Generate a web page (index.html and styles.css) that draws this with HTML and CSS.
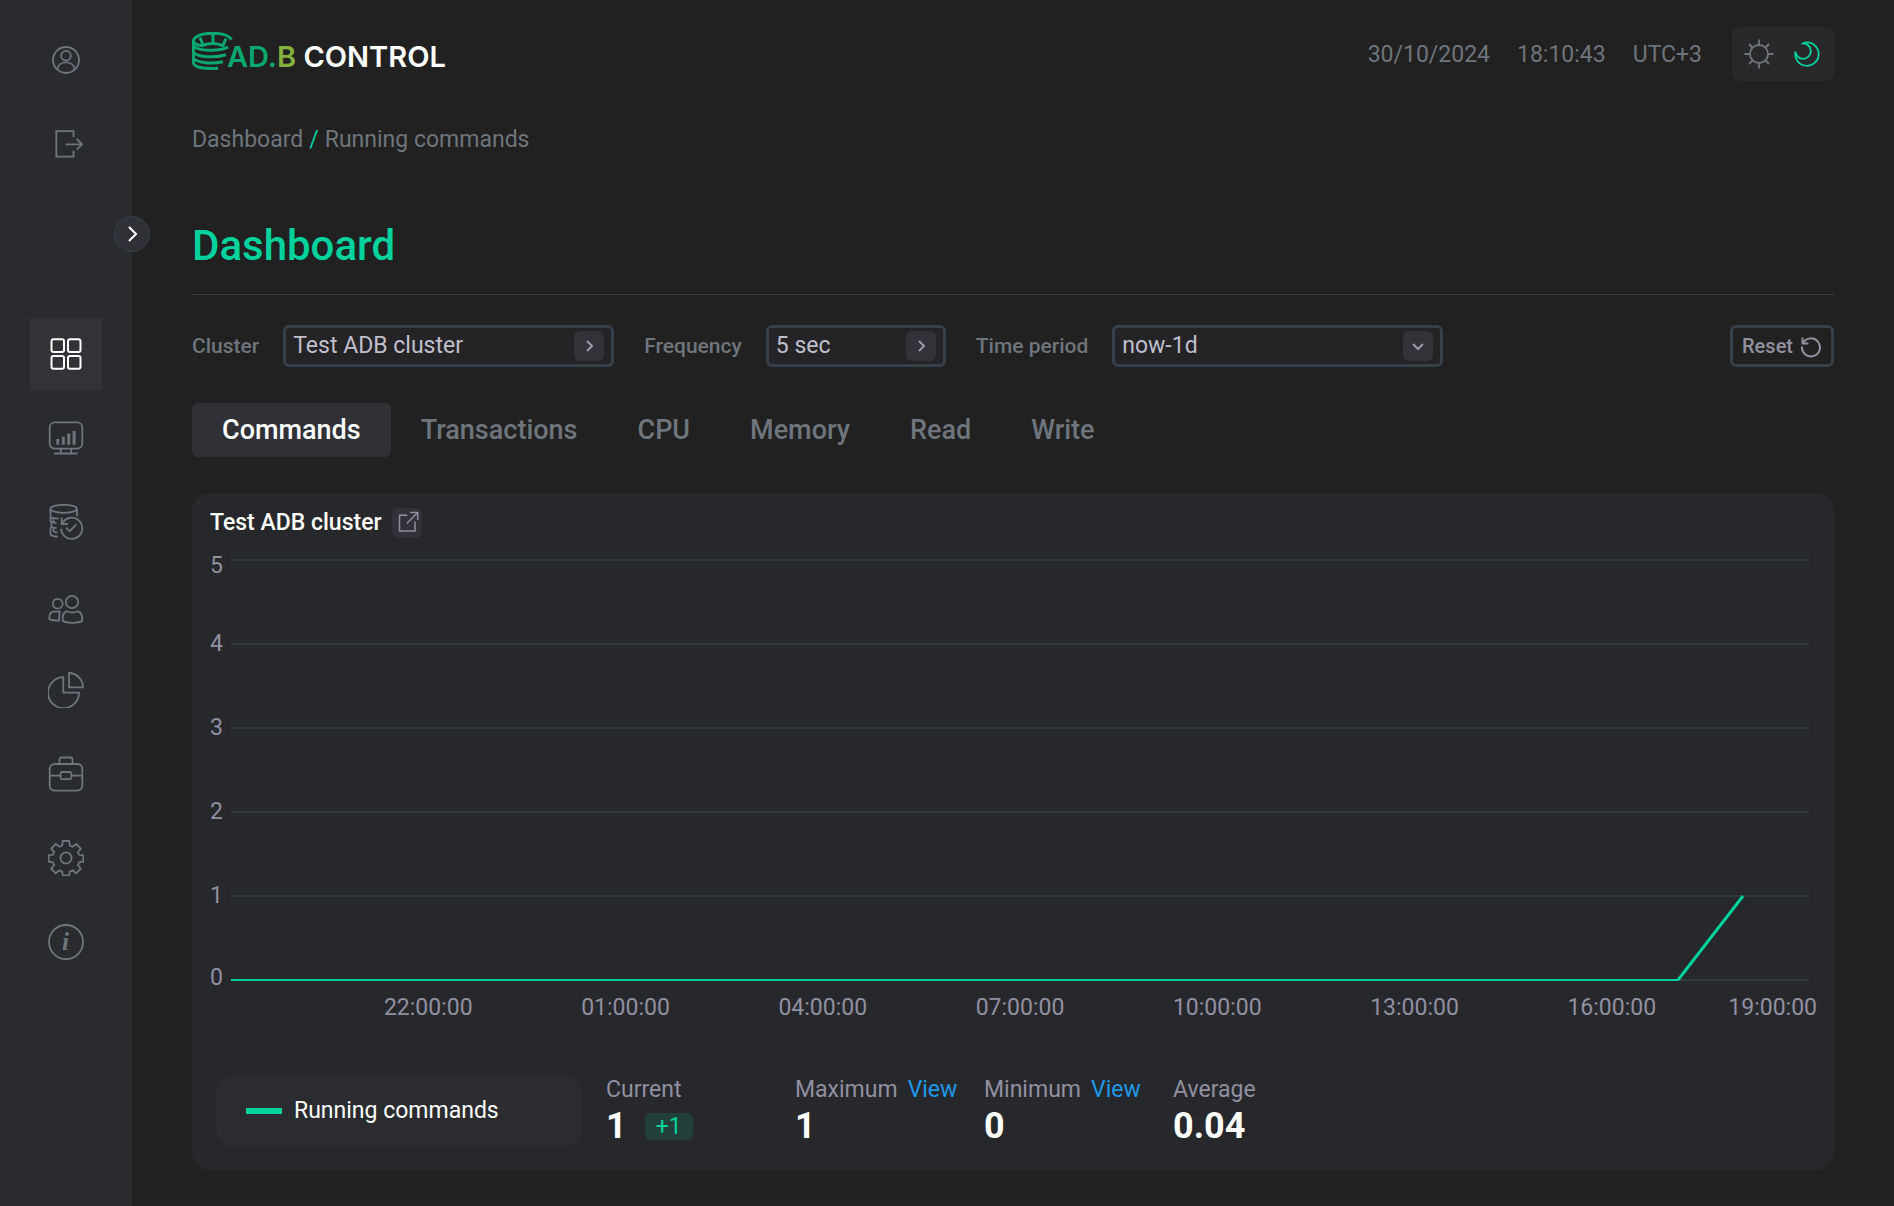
FILE: index.html
```html
<!DOCTYPE html>
<html lang="en">
<head>
<meta charset="utf-8">
<meta name="viewport" content="width=device-width, initial-scale=1">
<title>ADB Control - Dashboard</title>
<link rel="stylesheet" href="styles.css">
</head>
<body>
<div class="app">
  <aside class="sidebar">
    <div class="side-group">
      <a class="side-link" href="#profile" aria-label="Profile">
        <svg class="icon" viewBox="0 0 36 36"><circle cx="18" cy="18" r="13"/><circle cx="18" cy="13.7" r="4.8"/><path d="M9.3 27C9.8 22.800 13.500 20.400 18 20.400s8.200 2.400 8.700 6.600"/></svg>
      </a>
      <a class="side-link" href="#logout" aria-label="Log out">
        <svg class="icon" viewBox="0 0 36 36"><path d="M25.500 11V5.200H8.300v25.400h17.200v-5.800M17.500 18.300h16.500M28.800 13l5.300 5.300-5.300 5.400"/></svg>
      </a>
    </div>
    <nav class="side-group side-nav" aria-label="Main">
      <a class="side-link active" href="#dashboard" aria-label="Dashboard">
        <svg class="icon" viewBox="0 0 36 36"><rect x="3.500" y="3.300" width="12.500" height="12.700" rx="2"/><rect x="20" y="3.300" width="12.500" height="12.700" rx="2"/><rect x="3.500" y="20" width="12.500" height="12.700" rx="2"/><rect x="20" y="20" width="12.500" height="12.700" rx="2"/></svg>
      </a>
      <a class="side-link" href="#monitoring" aria-label="Monitoring">
        <svg class="icon" viewBox="0 0 36 36"><rect x="1.700" y="2.400" width="32.600" height="26.200" rx="5"/><path d="M12.800 28.600v4.600M23.200 28.600v4.600M6 33.500h23.600"/><path class="solid" d="M8.300 19h3v5.700h-3zM13.800 16.700h3v8h-3zM19.200 13.800h3v10.900h-3zM24.600 11h3v13.700h-3z"/></svg>
      </a>
      <a class="side-link" href="#backups" aria-label="Backups">
        <svg class="icon" viewBox="0 0 36 36"><ellipse cx="15.700" cy="4.800" rx="13.200" ry="4"/><path d="M2.500 5v8c1.500 1 4.500 1.300 8 1.500M29 5v7.200M2.500 13.500v4c1.500 1 3.500 1.300 6 1.500M3.500 18v5.200c1.500.5 3 .6 5 .8M2.500 23.300v6.900c1 1.700 4 2.400 7.500 2.500M5.500 14v3.500M5.500 24v3.600c1 .6 2 .8 4 1"/><path d="M14.500 19a10.600 10.600 0 1 1-1.400 5.800M13.700 13.700v6.300h6.300M18 23.700l3.700 3.600 6.600-7"/></svg>
      </a>
      <a class="side-link" href="#users" aria-label="Users">
        <svg class="icon" viewBox="0 0 36 36"><circle cx="24" cy="14" r="6.200"/><circle cx="9.700" cy="15.700" r="4.900"/><path d="M19 23.200c-3 .8-4.700 4.500-4.300 9.600 3 2.500 16 2.900 19.500 0 .3-5.500-1.600-8.800-4.600-9.600-3 1.500-7.600 1.500-10.600 0zM11.800 23.600H5.500c-3 0-4.400 3-4.100 7.500 2.600 1.200 6 1.500 9.600 1.500.1-3.200.3-6 .8-9z"/></svg>
      </a>
      <a class="side-link" href="#reports" aria-label="Reports">
        <svg class="icon" viewBox="0 0 36 36"><path d="M15.300 5.200v15.500H31A15.500 15.500 0 1 1 15.300 5.200zM21 1v14.300h14A14.300 14.300 0 0 0 21 1z"/></svg>
      </a>
      <a class="side-link" href="#jobs" aria-label="Jobs">
        <svg class="icon" viewBox="0 0 36 36"><rect x="1.700" y="8" width="32.600" height="26.600" rx="5"/><path d="M11.500 8V3.500a2 2 0 0 1 2-2h9a2 2 0 0 1 2 2V8M2 19.700h10.600M23.400 19.700H34"/><rect x="12.600" y="16" width="10.800" height="7.200" rx="1.500"/></svg>
      </a>
      <a class="side-link" href="#settings" aria-label="Settings">
        <svg class="icon" viewBox="0 0 36 36"><circle cx="18" cy="18" r="5.600"/><path d="M14.800 1h6.400l.6 4.600 2.800 1.200 3.700-2.900 4.500 4.600-2.900 3.600 1.200 2.700 4.200.6v6.200l-4.200.8-1.200 2.700 2.900 3.600-4.500 4.600-3.700-2.900-2.800 1.200-.6 3.700h-6.400l-.6-3.700-2.800-1.200-3.700 2.900-4.500-4.600 2.900-3.600-1.200-2.700-4.200-.8v-6.200l4.200-.6 1.200-2.700-2.900-3.600 4.500-4.600 3.700 2.900 2.800-1.200z"/></svg>
      </a>
      <a class="side-link" href="#about" aria-label="About">
        <svg class="icon" viewBox="0 0 36 36"><circle cx="18" cy="18" r="17"/><text class="info-letter" x="17.500" y="26" text-anchor="middle">i</text></svg>
      </a>
    </nav>
    <button class="expand" type="button" aria-label="Expand menu">
      <svg class="icon-small" viewBox="0 0 18 18"><path d="M6.500 2.500 13 9l-6.500 6.500"/></svg>
    </button>
  </aside>

  <main class="main">
    <header class="topbar">
      <a class="logo" href="#home">
        <svg class="logo-mark" viewBox="0 0 42 38"><path d="M39.500 7.500C37 3.500 29 1.300 20.500 1.300 9.500 1.300 1.400 4.600 1.400 9.200v22C2.500 34.500 10 37.300 26 36.300M1.400 9.200c.5 2 4 4 9 4.500 6-2.800 14-2.800 20.500 0L34 6.500M8 5.500l3 7.500M21 2v8.500M1.400 14c5 5 24 6 34.600 1.200M1.400 20.500c5 5 22 5.500 32.600 2.200M1.400 26.500c5 4.500 18 5.500 29.600 3.200"/></svg>
        <span class="logo-text"><span class="logo-ad">AD.</span><span class="logo-b">B</span> CONTROL</span>
      </a>
      <div class="top-info">
        <div class="clock"><span>30/10/2024</span><span>18:10:43</span><span>UTC+3</span></div>
        <div class="theme">
          <button class="theme-button" type="button" aria-label="Light theme">
            <svg class="icon" viewBox="0 0 36 36"><circle cx="18" cy="18" r="9"/><path d="M18 3.500V9M18 27v5.500M3.500 18H9M27 18h5.500M8 8l3.500 3.500M24.500 24.500 28 28M28 8l-3.500 3.500M11.500 24.500 8 28"/></svg>
          </button>
          <button class="theme-button on" type="button" aria-label="Dark theme">
            <svg class="icon" viewBox="0 0 36 36"><path d="M6.500 15.800A11.700 11.700 0 1 0 18 6.400c-1.500 0-3 .2-4 1A7.700 7.700 0 1 1 6.500 15.800z"/></svg>
          </button>
        </div>
      </div>
    </header>

    <nav class="crumbs" aria-label="Breadcrumb"><a href="#dashboard">Dashboard</a><span class="slash">/</span><a href="#running">Running commands</a></nav>

    <h1 class="title">Dashboard</h1>

    <form class="filters">
      <div class="field">
        <label for="cluster">Cluster</label>
        <div class="pick wide">
          <select id="cluster"><option>Test ADB cluster</option></select>
          <svg class="chevron" viewBox="0 0 30 30"><path d="m13 10 5 5-5 5"/></svg>
        </div>
      </div>
      <div class="field">
        <label for="frequency">Frequency</label>
        <div class="pick">
          <select id="frequency"><option>5 sec</option></select>
          <svg class="chevron" viewBox="0 0 30 30"><path d="m13 10 5 5-5 5"/></svg>
        </div>
      </div>
      <div class="field">
        <label for="period">Time period</label>
        <div class="pick wide">
          <select id="period"><option>now-1d</option></select>
          <svg class="chevron" viewBox="0 0 30 30"><path d="m10 13 5 5 5-5"/></svg>
        </div>
      </div>
      <button class="reset" type="reset">Reset
        <svg class="icon-reset" viewBox="0 0 24 24"><path d="M3.700 9.800A9 9 0 1 1 3 12.500M3.500 3.500v6h6"/></svg>
      </button>
    </form>

    <div class="tabs" role="tablist">
      <button class="tab on" type="button" role="tab" aria-selected="true">Commands</button>
      <button class="tab" type="button" role="tab">Transactions</button>
      <button class="tab" type="button" role="tab">CPU</button>
      <button class="tab" type="button" role="tab">Memory</button>
      <button class="tab" type="button" role="tab">Read</button>
      <button class="tab" type="button" role="tab">Write</button>
    </div>

    <section class="card">
      <div class="card-head">
        <h2>Test ADB cluster</h2>
        <a class="open" href="#cluster-page" aria-label="Open cluster">
          <svg viewBox="0 0 30 30"><path d="M15.300 7.300H7.500V23H23v-9.500M14.700 15.500 25.500 4.700M18 4.500h7.700V12"/></svg>
        </a>
      </div>
      <div class="chart">
        <div class="y-axis"><span>5</span><span>4</span><span>3</span><span>2</span><span>1</span><span>0</span></div>
        <svg class="plot" viewBox="0 0 1578 420" preserveAspectRatio="none" role="img" aria-label="Running commands over time">
          <path class="grid" d="M0 0H1578M0 84H1578M0 168H1578M0 252H1578M0 336H1578M0 420H1578"/>
          <path class="series flat" d="M0 420H1447"/>
          <path class="series" d="M1447 420L1512 336"/>
        </svg>
        <div class="x-axis"><i></i><span>22:00:00</span><span>01:00:00</span><span>04:00:00</span><span>07:00:00</span><span>10:00:00</span><span>13:00:00</span><span>16:00:00</span><span class="last">19:00:00</span></div>
      </div>
      <div class="summary">
        <div class="legend"><i class="swatch"></i>Running commands</div>
        <dl class="stats">
          <div><dt>Current</dt><dd>1<span class="delta">+1</span></dd></div>
          <div><dt>Maximum<a href="#max">View</a></dt><dd>1</dd></div>
          <div><dt>Minimum<a href="#min">View</a></dt><dd>0</dd></div>
          <div><dt>Average</dt><dd>0.04</dd></div>
        </dl>
      </div>
    </section>
  </main>
</div>
</body>
</html>
```

FILE: styles.css
```css
* { box-sizing: border-box; }

body {
  margin: 0;
  background: #212121;
  color: #6e757c;
  font-family: Roboto, "Liberation Sans", sans-serif;
  font-size: 23px;
  line-height: 30px;
}

a { color: inherit; text-decoration: none; }
button, select { font: inherit; color: inherit; }
button { cursor: pointer; }
svg { display: block; fill: none; stroke: currentColor; }

.app { display: flex; min-height: 100vh; }

/* Sidebar */
.sidebar {
  position: relative;
  flex: 0 0 132px;
  padding: 24px 30px;
  background: #2a2b2f;
}
.side-group { display: flex; flex-direction: column; gap: 12px; }
.side-nav { margin-top: 138px; }
.side-link {
  display: grid;
  place-items: center;
  height: 72px;
}
.side-link.active { background: #323238; color: #fff; }
.icon { width: 36px; height: 36px; stroke-width: 1.8; }
.side-link.active .icon { stroke-width: 2; }
.solid { fill: currentColor; stroke: none; }
.info-letter {
  font: italic bold 25px "Liberation Serif", serif;
  fill: currentColor;
  stroke: none;
}
.expand {
  position: absolute;
  top: 216px;
  right: -18px;
  display: grid;
  place-items: center;
  width: 36px;
  height: 36px;
  padding: 0;
  border: 1px solid #35404a;
  border-radius: 50%;
  background: #303136;
  color: #fff;
}
.icon-small { width: 18px; height: 18px; stroke-width: 2; stroke-linecap: round; }

/* Page */
.main { flex: 1; min-width: 0; padding: 27px 60px 36px; }
.topbar { display: flex; justify-content: space-between; height: 54px; }
.logo { display: flex; padding-top: 5px; color: #fff; }
.logo-mark { width: 42px; height: 38px; margin-right: -7px; color: #0aa870; stroke-width: 3; }
.logo-text {
  padding-top: 8px;
  font: 600 29px/34px Inter, "Liberation Sans", sans-serif;
  white-space: nowrap;
}
.logo-ad { color: #0aa870; }
.logo-b { color: #83b13b; }
.top-info { display: flex; align-items: center; gap: 30px; }
.clock { display: flex; gap: 27px; padding-top: 2px; white-space: nowrap; }
.theme {
  display: flex;
  gap: 12px;
  padding: 9px;
  border-radius: 8px;
  background: #29292c;
}
.theme-button { padding: 0; border: 0; background: none; }
.theme-button.on { color: #00d29d; }

.crumbs { display: flex; gap: 6px; margin-top: 44px; }
.slash { color: #00d29d; }

.title {
  margin: 67px 0 0;
  padding-bottom: 24px;
  border-bottom: 1px solid #3a3b3e;
  color: #00d29d;
  font-size: 42px;
  line-height: 48px;
  font-weight: 500;
}

.filters { display: flex; align-items: center; gap: 30px; margin-top: 30px; }
.field { display: flex; align-items: center; gap: 24px; }
.field label { font-size: 21px; font-weight: 500; white-space: nowrap; }
.pick { display: grid; align-items: center; width: 180px; }
.pick.wide { width: 331px; }
.pick select {
  grid-area: 1 / 1;
  width: 100%;
  height: 42px;
  padding: 0 48px 0 7px;
  border: 3px solid #35404a;
  border-radius: 6px;
  background: #242427;
  color: #c0bfcc;
  appearance: none;
}
.chevron {
  grid-area: 1 / 1;
  justify-self: end;
  width: 30px;
  height: 30px;
  margin-right: 10px;
  border-radius: 6px;
  background: #323238;
  color: #9c9baa;
  stroke-width: 2;
  pointer-events: none;
}
.reset {
  display: flex;
  align-items: center;
  gap: 6px;
  height: 42px;
  margin-left: auto;
  padding: 0 8px 0 9px;
  border: 3px solid #35404a;
  border-radius: 6px;
  background: none;
  color: #9190a0;
  font-size: 20px;
  font-weight: 500;
}
.icon-reset { width: 24px; height: 24px; stroke-width: 2; }

.tabs { display: flex; margin-top: 36px; }
.tab {
  height: 54px;
  padding: 0 30px;
  border: 0;
  border-radius: 6px;
  background: none;
  font-size: 27px;
  font-weight: 500;
}
.tab.on { background: #303136; color: #fff; }

/* Chart card */
.card {
  margin-top: 36px;
  padding: 15px 18px 23px;
  border-radius: 18px;
  background: #27282c;
}
.card-head { display: flex; align-items: center; gap: 10px; }
.card-head h2 { margin: 0; color: #fff; font-size: 23px; font-weight: 500; }
.open {
  width: 30px;
  height: 30px;
  border-radius: 6px;
  background: #323238;
  color: #9190a0;
}
.open svg { stroke-width: 1.5; }

.chart {
  display: grid;
  grid-template: 420px auto / 21px 1fr;
  margin: 22px 7px 0 0;
  color: #9190a0;
}
.y-axis { display: grid; grid-template-rows: 1fr repeat(4, 2fr) 1fr; }
.y-axis span { align-self: center; line-height: 24px; }
.y-axis span:first-child { align-self: start; margin-top: -6px; }
.y-axis span:last-child { align-self: end; margin-bottom: -10px; }
.plot { width: 100%; height: 100%; overflow: visible; }
.plot path { vector-effect: non-scaling-stroke; }
.grid { stroke: #313a43; stroke-width: 2; }
.series { stroke: #00d29d; stroke-width: 3; }
.series.flat { stroke-width: 2; }
.x-axis {
  grid-column: 2;
  display: grid;
  grid-template-columns: 1fr repeat(7, 2fr) 1fr;
  margin-top: 13px;
}
.x-axis span { justify-self: center; }
.x-axis .last { justify-self: end; margin-right: -8px; }

.summary { display: flex; gap: 24px; margin: 52px 0 0 6px; }
.legend {
  display: flex;
  align-items: center;
  gap: 12px;
  width: 366px;
  height: 72px;
  padding: 0 30px;
  border-radius: 18px;
  background: #2b2c30;
  color: #fff;
}
.swatch { width: 36px; height: 6px; background: #00d29d; }
.stats { display: grid; grid-template-columns: repeat(4, 189px); margin: 0; }
.stats dt { display: flex; gap: 10px; color: #9190a0; }
.stats dt a { color: #1d98ea; }
.stats dd {
  display: flex;
  align-items: center;
  gap: 18px;
  margin: 0;
  color: #fff;
  font-size: 36px;
  font-weight: 700;
  line-height: 42px;
}
.delta {
  padding: 0 11px;
  border-radius: 6px;
  background: #224039;
  color: #00d29d;
  font-size: 23px;
  font-weight: 400;
  line-height: 27px;
}
```
